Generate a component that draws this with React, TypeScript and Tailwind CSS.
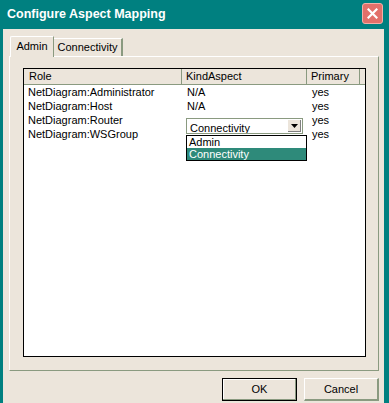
import React from 'react'

const rows = [
  { role: 'NetDiagram:Administrator', kind: 'N/A', primary: 'yes' },
  { role: 'NetDiagram:Host', kind: 'N/A', primary: 'yes' },
  { role: 'NetDiagram:Router', kind: '', primary: 'yes' },
  { role: 'NetDiagram:WSGroup', kind: '', primary: 'yes' },
]

export default function App() {
  return (
    <div className="w-[389px] h-[403px] bg-[#008080] flex flex-col font-['Liberation_Sans',sans-serif] text-[11px] text-black overflow-hidden">
      {/* Title bar */}
      <div className="h-[29px] flex items-center justify-between pl-[7px] pr-[6px] shrink-0">
        <span className="text-white font-bold text-[12.5px]">Configure Aspect Mapping</span>
        <div className="w-[21px] h-[21px] rounded-[3px] bg-[#e2706a] border border-[#f4b0a8] flex items-center justify-center mb-[2px]">
          <svg width="11" height="11" viewBox="0 0 11 11">
            <path d="M1.5 1.5 L9.5 9.5 M9.5 1.5 L1.5 9.5" stroke="white" strokeWidth="2.2" strokeLinecap="square" />
          </svg>
        </div>
      </div>

      {/* Body */}
      <div className="flex-1 ml-[3px] mr-[5px] bg-[#ece5db] flex flex-col pt-[7px] pl-[6px] pr-[1px]">
        {/* Tabs */}
        <div className="flex items-end h-[20px] pl-[1px]">
          <div className="h-[21px] w-[44px] bg-[#ece5db] border-t border-l border-white border-r border-r-[#8a9a80] rounded-tl-[2px] flex items-center justify-center pb-[1px] relative z-10 -mb-[1px]">
            Admin
          </div>
          <div className="h-[18px] w-[69px] border-t border-white border-r-2 border-r-[#8a9a80] flex items-center justify-center">
            Connectivity
          </div>
        </div>

        {/* Tab panel */}
        <div className="w-[370px] h-[315px] border-t border-l border-white border-r border-b border-r-[#8a9a80] border-b-[#8a9a80] pt-[11px] pl-[13px]">
          {/* List view */}
          <div className="relative w-[343px] h-[289px] bg-white border border-black">
            <div className="flex h-[16px] bg-[#ece5db] border-b border-[#8a9a80]">
              <div className="w-[158px] pl-[5px] flex items-center border-r border-[#8a9a80]">Role</div>
              <div className="w-[125px] pl-[4px] flex items-center border-r border-[#8a9a80]">KindAspect</div>
              <div className="w-[53px] pl-[4px] flex items-center border-r border-[#8a9a80]">Primary</div>
              <div className="flex-1" />
            </div>
            {rows.map((r) => (
              <div key={r.role} className="flex h-[14px] items-center">
                <div className="w-[158px] pl-[4px]">{r.role}</div>
                <div className="w-[125px] pl-[5px]">{r.kind}</div>
                <div className="w-[53px] pl-[5px]">{r.primary}</div>
              </div>
            ))}

            {/* Combo box */}
            <div className="absolute left-[162px] top-[49px] w-[117px] h-[16px] border border-[#8a9a80] bg-white flex items-center">
              <span className="pl-[3px] pt-[3px] flex-1 leading-none h-[13px] overflow-hidden">Connectivity</span>
              <div className="w-[13px] h-[12px] mr-[1px] bg-[#ece5db] border-r border-b border-[#808080] flex items-center justify-center">
                <svg width="7" height="4" viewBox="0 0 7 4">
                  <path d="M0 0 H7 L3.5 4 Z" fill="black" />
                </svg>
              </div>
            </div>

            {/* Dropdown list */}
            <div className="absolute left-[162px] top-[66px] w-[121px] h-[26px] border border-black bg-white flex flex-col">
              <div className="h-[12px] pl-[2px] flex items-center">Admin</div>
              <div className="h-[12px] pl-[2px] flex items-center bg-[#2e8a7a] text-white">Connectivity</div>
            </div>
          </div>
        </div>

        {/* Buttons */}
        <div className="flex justify-end gap-[7px] pt-[7px] pr-[4px]">
          <button className="w-[75px] h-[23px] bg-[#ece5db] border border-black shadow-[inset_-1px_-1px_0_#8a9a80,inset_1px_1px_0_#ffffff] flex items-center justify-center">
            OK
          </button>
          <button className="w-[75px] h-[23px] bg-[#ece5db] border-t border-l border-white border-r-2 border-b-2 border-r-[#8a9a80] border-b-[#8a9a80] flex items-center justify-center">
            Cancel
          </button>
        </div>
      </div>
    </div>
  )
}
